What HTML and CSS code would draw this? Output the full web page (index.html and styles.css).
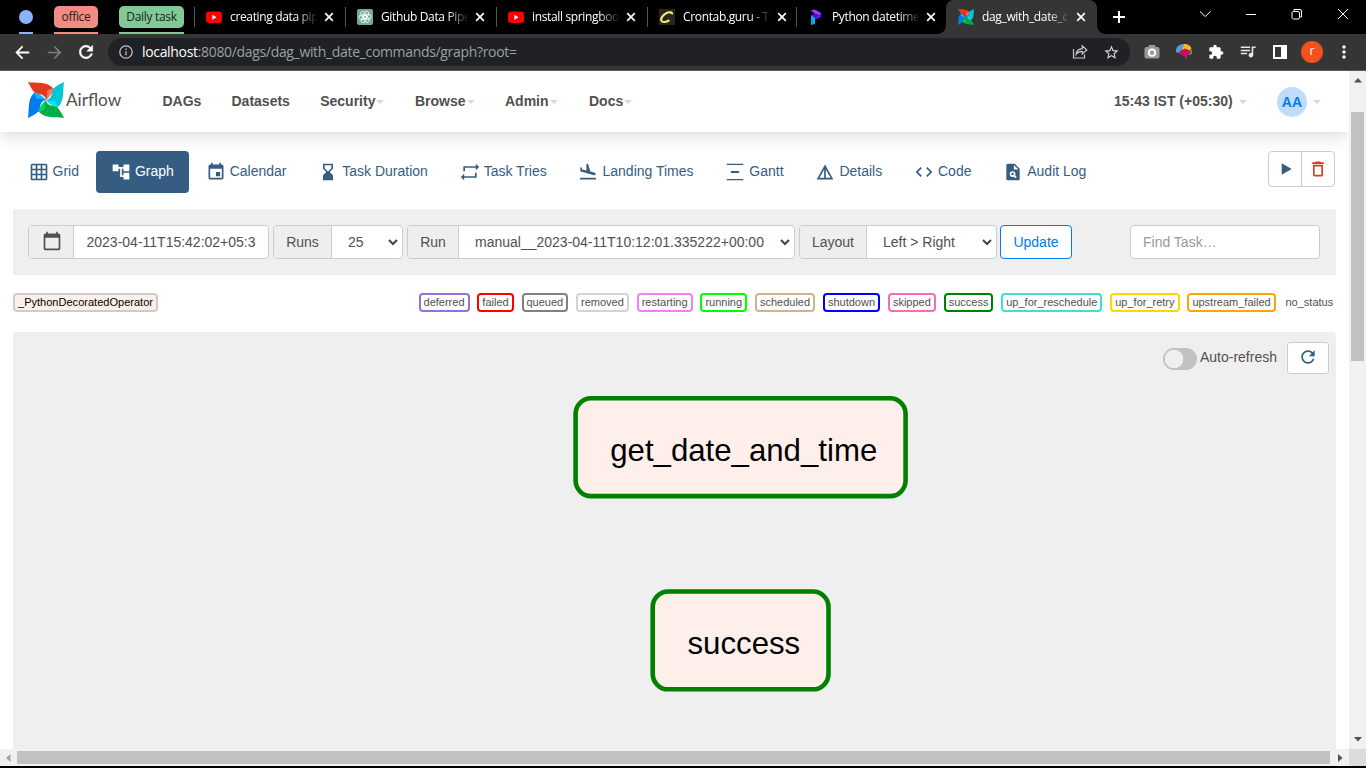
FILE: index.html
```html
<!DOCTYPE html>
<html lang="en">
<head>
<meta charset="utf-8">
<title>dag_with_date_commands - Graph - Airflow</title>
<link rel="stylesheet" href="styles.css">
</head>
<body>
<svg class="defs" width="0" height="0" aria-hidden="true">
  <defs>
    <symbol id="pinwheel" viewBox="0 0 36 36">
      <g><path fill="#e43921" d="M0 0C8 1.500 19-1 25.500 6.500L18 18C17 11 10 13 6.500 10.500C4 8 2 4 0 0Z"/><path fill="#ff7557" d="M25.500 6.500C20 7 18.500 9 19.200 11.500Q19.500 14 18 18C22 15 24.500 11 25.500 6.500Z"/></g>
      <g transform="rotate(90 18 18)"><path fill="#00c7d4" d="M0 0C8 1.500 19-1 25.500 6.500L18 18C17 11 10 13 6.500 10.500C4 8 2 4 0 0Z"/><path fill="#11e1ee" d="M25.500 6.500C20 7 18.500 9 19.200 11.500Q19.500 14 18 18C22 15 24.500 11 25.500 6.500Z"/></g>
      <g transform="rotate(180 18 18)"><path fill="#00ad46" d="M0 0C8 1.500 19-1 25.500 6.500L18 18C17 11 10 13 6.500 10.500C4 8 2 4 0 0Z"/><path fill="#04d659" d="M25.500 6.500C20 7 18.500 9 19.200 11.500Q19.500 14 18 18C22 15 24.500 11 25.500 6.500Z"/></g>
      <g transform="rotate(270 18 18)"><path fill="#017cee" d="M0 0C8 1.500 19-1 25.500 6.500L18 18C17 11 10 13 6.500 10.500C4 8 2 4 0 0Z"/><path fill="#0cb6ff" d="M25.500 6.500C20 7 18.500 9 19.200 11.500Q19.500 14 18 18C22 15 24.500 11 25.500 6.500Z"/></g>
    </symbol>
    <symbol id="youtube" viewBox="0 0 16 16"><rect y="2.500" width="16" height="11.500" rx="3" fill="#f00"/><path fill="#fff" d="M6.300 5.800v4.900l4.200-2.450z"/></symbol>
    <symbol id="close" viewBox="0 0 10 10"><path d="M1.200 1.200l7.600 7.600M8.800 1.200l-7.600 7.600" fill="none" stroke="#fff" stroke-width="1.700"/></symbol>
    <symbol id="chev" viewBox="0 0 10 7"><path d="M1 1l4 4 4-4" fill="none" stroke="#444" stroke-width="2"/></symbol>
    <symbol id="refresh" viewBox="0 0 24 24"><path d="M17.650 6.350C16.200 4.900 14.210 4 12 4c-4.420 0-7.990 3.580-7.990 8s3.570 8 7.990 8c3.730 0 6.840-2.550 7.730-6h-2.080c-.820 2.330-3.040 4-5.650 4-3.310 0-6-2.690-6-6s2.690-6 6-6c1.660 0 3.140.690 4.220 1.780L13 11h7V4l-2.350 2.350z"/></symbol>
  </defs>
</svg>

<header class="tabstrip">
  <div class="group dot"><span></span></div>
  <div class="group office"><span>office</span></div>
  <div class="group daily"><span>Daily task</span></div>
  <div class="tab"><svg class="fav"><use href="#youtube"/></svg><span class="title">creating data pip</span><svg class="x"><use href="#close"/></svg></div>
  <div class="tab"><svg class="fav" viewBox="0 0 16 16"><rect width="16" height="16" rx="2" fill="#74aa9c"/><g fill="none" stroke="#fff" stroke-width=".8"><rect x="5.600" y="2" width="4.300" height="7.500" rx="2.150" transform="rotate(30 8 8)"/><rect x="5.600" y="2" width="4.300" height="7.500" rx="2.150" transform="rotate(90 8 8)"/><rect x="5.600" y="2" width="4.300" height="7.500" rx="2.150" transform="rotate(150 8 8)"/><rect x="5.600" y="2" width="4.300" height="7.500" rx="2.150" transform="rotate(210 8 8)"/><rect x="5.600" y="2" width="4.300" height="7.500" rx="2.150" transform="rotate(270 8 8)"/><rect x="5.600" y="2" width="4.300" height="7.500" rx="2.150" transform="rotate(330 8 8)"/></g></svg><span class="title">Github Data Pipe</span><svg class="x"><use href="#close"/></svg></div>
  <div class="tab"><svg class="fav"><use href="#youtube"/></svg><span class="title">install springboo</span><svg class="x"><use href="#close"/></svg></div>
  <div class="tab tab-short"><svg class="fav" viewBox="0 0 16 16"><rect width="16" height="16" fill="#272720"/><path d="M13 5.300c.6-2-3-2.800-6-1C3.500 6.300 1.600 9.500 2.300 11.500c.7 2.200 5 2.100 8-.4" fill="none" stroke="#f8f06a" stroke-width="2.100"/></svg><span class="title">Crontab.guru - T</span><svg class="x"><use href="#close"/></svg></div>
  <div class="tab"><svg class="fav" viewBox="0 0 16 16"><path fill="#9a3cff" d="M2.500 1.500L7 .5l6 3.500v3.500L7.500 5z"/><path fill="#6411e8" d="M13 5v3L7 11V8.500l3-3z"/><path fill="#4b10c8" d="M3 6l3.500-1.500L10 6.500 7 8.500z"/><path fill="#07a8f2" d="M3 6l4 2.500V15L3 16z"/></svg><span class="title">Python datetime</span><svg class="x"><use href="#close"/></svg></div>
  <div class="tab active"><svg class="fav"><use href="#pinwheel"/></svg><span class="title">dag_with_date_c</span><svg class="x"><use href="#close"/></svg></div>
  <svg class="plus" viewBox="0 0 12 12"><path d="M6 0v12M0 6h12" stroke="#fff" stroke-width="2"/></svg>
  <svg class="win" viewBox="0 0 152 12" fill="none" stroke="#fff" stroke-width="1"><path d="M1 3.500l5.200 5L11.500 3.500M47 6.500h10M139 1l10 10M149 1l-10 10"/><rect x="93" y="3.500" width="7.500" height="7.500" rx="1.500"/><path d="M95 3V1.500h6q1.500 0 1.500 1.500v6H101"/></svg>
</header>

<div class="toolbar">
  <svg class="tb back" viewBox="0 0 24 24" fill="#fff"><path d="M20.500 10.800H7.300l5.600-5.600L11.300 3.600 3 12l8.300 8.400 1.600-1.600-5.600-5.600h13.200z"/></svg>
  <svg class="tb fwd" viewBox="0 0 24 24" fill="#7d7d7d"><path transform="translate(24 0) scale(-1 1)" d="M20.500 11H7.300l5.600-5.800L11.500 3.800 3.300 12l8.200 8.200 1.400-1.400L7.300 13h13.200z"/></svg>
  <svg class="tb reload" fill="#fff" stroke="#fff" stroke-width=".6"><use href="#refresh"/></svg>
  <div class="omnibox">
    <svg class="info" viewBox="0 0 14 14" fill="none" stroke="#bdc1c6" stroke-width="1.300"><circle cx="7" cy="7" r="6.200"/><path d="M7 6.300v4M7 3.500v1.400"/></svg>
    <span class="url"><b>localhost</b>:8080/dags/dag_with_date_commands/graph?root=</span>
    <svg class="share" viewBox="0 0 16 16" fill="none" stroke="#c9c9c9" stroke-width="1.200"><path d="M1.500 5v9h11v-3.500M4 10.500C4.500 7 7 4.800 10.300 4.700V1.800L14.800 6l-4.500 4V7.400C7.500 7.200 5.700 8.300 4 10.500z"/></svg>
    <svg class="star" viewBox="0 0 24 24" fill="#d5d5d5"><path d="M22 9.240l-7.190-.620L12 2 9.190 8.630 2 9.240l5.460 4.730L5.820 21 12 17.270 18.180 21l-1.630-7.030L22 9.240zM12 15.400l-3.760 2.270 1-4.280-3.320-2.880 4.380-.380L12 6.100l1.710 4.040 4.380.380-3.320 2.880 1 4.280L12 15.400z"/></svg>
  </div>
  <div class="exts">
    <svg viewBox="0 0 16 16"><rect x=".5" y="3" width="15" height="11.500" rx="2" fill="#999"/><path fill="#999" d="M5 1h6l1 3H4z"/><circle cx="8" cy="8.700" r="3.200" fill="#999" stroke="#fff" stroke-width="1.800"/></svg>
    <svg viewBox="0 0 16 16"><path fill="#4a9fdc" d="M0 7C0 2 4 0 8 0L7 5 3 9 0 8z"/><path fill="#fbb820" d="M8 0c4 0 7 2 7.500 5L12 7 6 5.500z"/><path fill="#55a52c" d="M13 6l3 0v4l-3 1z"/><path fill="#c80f63" d="M4 7l5-2.500L15 7l-2 3.500-2 1V16l-3-4-5-2.500z"/></svg>
    <svg viewBox="0 0 24 24" fill="#fff"><path d="M20.500 11H19V7c0-1.100-.9-2-2-2h-4V3.500C13 2.120 11.880 1 10.500 1S8 2.120 8 3.500V5H4c-1.100 0-1.990.9-1.990 2v3.800H3.500c1.490 0 2.700 1.210 2.700 2.700s-1.210 2.700-2.700 2.700H2V20c0 1.100.9 2 2 2h3.800v-1.500c0-1.490 1.210-2.700 2.700-2.700 1.490 0 2.700 1.210 2.700 2.700V22H17c1.100 0 2-.9 2-2v-4h1.500c1.380 0 2.500-1.120 2.500-2.500S21.880 11 20.500 11z"/></svg>
    <svg viewBox="2 3 20.500 20" fill="#e8e8e8"><path d="M15 6H3v2h12V6zm0 4H3v2h12v-2zM3 16h8v-2H3v2zM17 6v8.180c-.310-.110-.650-.180-1-.180-1.660 0-3 1.340-3 3s1.340 3 3 3 3-1.340 3-3V8h3V6h-5z"/></svg>
    <svg viewBox="0 0 16 16"><path fill="#fff" fill-rule="evenodd" d="M1 1h14v14H1zM3 3v10h6V3z"/></svg>
    <span class="profile">r</span>
    <svg viewBox="0 0 16 16" fill="#fff"><circle cx="8" cy="3" r="1.700"/><circle cx="8" cy="8" r="1.700"/><circle cx="8" cy="13" r="1.700"/></svg>
  </div>
</div>

<div class="viewport">
  <div class="page">
    <nav class="navbar">
      <a class="brand"><svg><use href="#pinwheel"/></svg><span>Airflow</span></a>
      <a>DAGs</a><a>Datasets</a><a>Security<i></i></a><a>Browse<i></i></a><a>Admin<i></i></a><a>Docs<i></i></a>
      <a class="clock">15:43 IST (+05:30)<i></i></a>
      <a class="user"><span>AA</span><i></i></a>
    </nav>
    <main class="content">
      <div class="views">
        <a><svg viewBox="0 0 24 24"><path d="M20 2H4c-1.100 0-2 .9-2 2v16c0 1.100.9 2 2 2h16c1.100 0 2-.9 2-2V4c0-1.100-.9-2-2-2zM8 20H4v-4h4v4zm0-6H4v-4h4v4zm0-6H4V4h4v4zm6 12h-4v-4h4v4zm0-6h-4v-4h4v4zm0-6h-4V4h4v4zm6 12h-4v-4h4v4zm0-6h-4v-4h4v4zm0-6h-4V4h4v4z"/></svg>Grid</a>
        <a class="current"><svg viewBox="0 0 24 24"><path d="M22 11V3h-7v3H9V3H2v8h7V8h2v10h4v3h7v-8h-7v3h-2V8h2v3z"/></svg>Graph</a>
        <a><svg viewBox="0 0 24 24"><path d="M17 12h-5v5h5v-5zM16 1v2H8V1H6v2H5c-1.110 0-1.990.9-1.990 2L3 19c0 1.100.890 2 2 2h14c1.100 0 2-.9 2-2V5c0-1.100-.9-2-2-2h-1V1h-2zm3 18H5V8h14v11z"/></svg>Calendar</a>
        <a><svg viewBox="0 0 24 24"><path d="M18 22l-.010-6L14 12l3.990-4.010L18 2H6v6l4 4-4 3.990V22h12zM8 7.500V4h8v3.500l-4 4-4-4z"/></svg>Task Duration</a>
        <a><svg viewBox="0 0 24 24"><path d="M5 5h14V2l4 4-4 4V7H6v4H4V5zM19 19H5v3l-4-4 4-4v3h13v-4h2v6z"/></svg>Task Tries</a>
        <a><svg viewBox="0 0 24 24"><path d="M2.500 19h19v2h-19v-2zm7.180-5.730l4.350 1.160 5.310 1.420c.8.210 1.620-.260 1.840-1.060.210-.8-.260-1.620-1.060-1.840l-5.310-1.420-2.760-9.020L10.120 2v8.280L5.150 8.950l-.930-2.320-1.450-.390v5.170l1.600.430 5.310 1.430z"/></svg>Landing Times</a>
        <a><svg viewBox="0 0 24 24"><path d="M22 2v1.500H2V2h20zM7 10.700v2.600h10v-2.600H7zM2 20.500V22h20v-1.500H2z"/></svg>Gantt</a>
        <a><svg viewBox="0 0 24 24"><path d="M12 3L2 21h20L12 3zm1 5.920L18.600 19H13V8.920zm-2 0V19H5.400L11 8.920z"/></svg>Details</a>
        <a><svg viewBox="0 0 24 24"><path d="M9.400 16.600L4.800 12l4.600-4.600L8 6l-6 6 6 6 1.400-1.400zm5.200 0l4.600-4.600-4.600-4.600L16 6l6 6-6 6-1.400-1.400z"/></svg>Code</a>
        <a><svg viewBox="0 0 24 24"><path d="M14 2H6c-1.100 0-1.990.9-1.990 2L4 20c0 1.100.890 2 1.990 2H18c1.100 0 2-.9 2-2V8l-6-6zm1.040 17.450l-1.880-1.880c-1.330.710-3.010.530-4.130-.590-1.370-1.370-1.370-3.580 0-4.950s3.580-1.370 4.950 0c1.120 1.120 1.310 2.800.590 4.130l1.880 1.880-1.410 1.410zM13 9V3.500L18.500 9H13z"/><circle cx="11.500" cy="14.500" r="1.500"/></svg>Audit Log</a>
        <div class="actions">
          <span><svg viewBox="0 0 24 24" fill="#355d82"><path d="M8 5v14l12-7z"/></svg></span>
          <span><svg viewBox="0 0 24 24" fill="#e43921"><path d="M6 19c0 1.100.9 2 2 2h8c1.100 0 2-.9 2-2V7H6v12zM8 9h8v10H8V9zm7.500-5l-1-1h-5l-1 1H5v2h14V4z"/></svg></span>
        </div>
      </div>

      <form class="filters">
        <div class="field base"><label><svg viewBox="0 0 24 24"><path d="M20 3h-1V1h-2v2H7V1H5v2H4c-1.100 0-2 .9-2 2v16c0 1.100.9 2 2 2h16c1.100 0 2-.9 2-2V5c0-1.100-.9-2-2-2zm0 18H4V8h16v13z"/></svg></label><div>2023-04-11T15:42:02+05:3</div></div>
        <div class="field runs"><label>Runs</label><div>25<svg><use href="#chev"/></svg></div></div>
        <div class="field run"><label>Run</label><div>manual__2023-04-11T10:12:01.335222+00:00<svg><use href="#chev"/></svg></div></div>
        <div class="field layout"><label>Layout</label><div>Left &gt; Right<svg><use href="#chev"/></svg></div></div>
        <span class="update">Update</span>
        <div class="search">Find Task…</div>
      </form>

      <div class="legend">
        <span class="op">_PythonDecoratedOperator</span>
        <span class="deferred">deferred</span><span class="failed">failed</span><span class="queued">queued</span><span class="removed">removed</span><span class="restarting">restarting</span><span class="running">running</span><span class="scheduled">scheduled</span><span class="shutdown">shutdown</span><span class="skipped">skipped</span><span class="success">success</span><span class="reschedule">up_for_reschedule</span><span class="retry">up_for_retry</span><span class="upstream">upstream_failed</span><span class="none">no_status</span>
      </div>

      <section class="graph">
        <div class="graph-tools"><span class="switch"></span><span class="auto">Auto-refresh</span><span class="reload-btn"><svg fill="#355d82"><use href="#refresh"/></svg></span></div>
        <svg class="nodes" viewBox="0 0 1323 375">
          <rect x="562.600" y="24.300" width="330" height="97.800" rx="15.500"/>
          <text x="597.200" y="87">get_date_and_time</text>
          <rect x="639.700" y="217.500" width="175.800" height="97.800" rx="15.500"/>
          <text x="674.500" y="280.300">success</text>
        </svg>
      </section>
    </main>
  </div>
  <div class="vbar"><svg viewBox="0 0 8 5"><path fill="#505050" d="M0 4.500L4 0l4 4.500z"/></svg><span></span><svg viewBox="0 0 8 5"><path fill="#505050" d="M0 0l4 4.500L8 0z"/></svg></div>
  <div class="hbar"><svg viewBox="0 0 5 8"><path fill="#a3a3a3" d="M4.500 0L0 4l4.500 4z"/></svg><span></span><svg viewBox="0 0 5 8"><path fill="#505050" d="M0 0l4.500 4L0 8z"/></svg></div>
  <div class="corner"></div>
</div>
</body>
</html>
```
FILE: styles.css
```css
* { box-sizing: border-box; }
body { margin: 0; width: 1366px; height: 768px; overflow: hidden; background: #000; font-family: "Liberation Sans", Arial, sans-serif; font-size: 14px; color: #51504f; }
svg { display: block; flex: none; }
.defs { position: absolute; }

/* browser tabs */
.tabstrip { display: flex; height: 34px; background: #000; font-family: "Open Sans", sans-serif; font-size: 12px; color: #fff; padding-left: 19px; }
.group { height: 34px; padding-top: 6px; border-bottom: 2px solid; flex: none; }
.group span { display: block; height: 22px; line-height: 21px; border-radius: 5px; text-align: center; color: #202124; white-space: nowrap; }
.dot { width: 14px; border-color: #8ab4f8; margin-right: 21px; padding-top: 10px; }
.dot span { height: 14px; border-radius: 50%; background: #8ab4f8; }
.office { width: 44px; border-color: #f28b82; margin-right: 21px; letter-spacing: -.3px; }
.office span { background: #f28b82; }
.daily { width: 65px; border-color: #81c995; margin-right: 10px; letter-spacing: -.3px; }
.daily span { background: #81c995; }
.tab { display: flex; align-items: center; width: 151px; height: 34px; padding-left: 12px; flex: none; background: linear-gradient(#555, #555) 0 7px / 1px 20px no-repeat; }
.tab-short { width: 149px; }
.tab-short + .tab { width: 150px; }
.fav { width: 16px; height: 16px; margin-right: 8px; }
.title { width: 88px; white-space: nowrap; line-height: 18px; letter-spacing: -.35px; -webkit-mask-image: linear-gradient(90deg, #000 66px, transparent 88px); mask-image: linear-gradient(90deg, #000 66px, transparent 88px); }
.x { width: 10px; height: 10px; margin-left: 6px; }
.active { background: #353535; border-radius: 8px 8px 0 0; position: relative; }
.active::before, .active::after { content: ""; position: absolute; bottom: 0; width: 8px; height: 8px; }
.active::before { left: -8px; background: radial-gradient(circle at 0 0, transparent 7.500px, #353535 8px); }
.active::after { right: -8px; background: radial-gradient(circle at 100% 0, transparent 7.500px, #353535 8px); }
.plus { width: 12px; height: 12px; margin: 11px 0 0 16px; }
.win { width: 152px; height: 12px; margin: 8px 0 0 74px; }

/* address bar */
.toolbar { display: flex; align-items: center; height: 37px; background: #353535; border-bottom: 1px solid #5b5b5b; padding-left: 13px; font-family: "Open Sans", sans-serif; }
.tb { width: 19px; height: 19px; margin-right: 13px; }
.reload { width: 20px; height: 20px; margin-left: -1px; margin-right: 12px; }
.omnibox { display: flex; align-items: center; width: 1022px; height: 28px; border-radius: 14px; background: #202124; padding-left: 11px; }
.info { width: 14px; height: 14px; margin-right: 9px; }
.url { width: 930px; color: #9aa0a6; font-size: 14px; letter-spacing: -.33px; line-height: 20px; white-space: nowrap; }
.url b { font-weight: 400; color: #fff; }
.share { width: 16px; height: 16px; margin-right: 15px; }
.star { width: 17px; height: 17px; }
.exts { display: flex; align-items: center; gap: 16px; margin-left: 14px; }
.exts svg { width: 16px; height: 16px; }
.profile { width: 22px; height: 22px; margin: 0 -3px; border-radius: 50%; background: #f4511e; color: #fff; font-size: 12px; line-height: 20px; text-align: center; }

/* page viewport with scrollbars */
.viewport { display: grid; grid-template: 678px 17px / 1349px 17px; height: 695px; }
.page { background: #fff; overflow: hidden; }
.vbar { background: #f1f1f1; display: flex; flex-direction: column; align-items: center; padding: 7px 0; }
.vbar svg { width: 8px; height: 5px; }
.vbar span { width: 13px; height: 249px; margin: 29px 0 376px; background: #c1c1c1; }
.hbar { background: #f1f1f1; display: flex; align-items: center; padding-left: 6px; }
.hbar svg { width: 5px; height: 8px; }
.hbar span { width: 1313px; height: 13px; margin: 0 8px 0 6px; background: #c1c1c1; }
.corner { background: #dcdcdc; }

/* Airflow navigation */
.navbar { display: grid; grid-template-columns: 134.500px 69px 88.700px 94.800px 90px 84px 525px 162px auto; align-items: center; height: 61px; padding: 0 0 1px 28px; font-weight: 700; background: #fff; box-shadow: 0 1px 20px rgba(0,0,0,.2); position: relative; white-space: nowrap; }
.navbar a { display: flex; align-items: center; }
.navbar i { border: 4px solid transparent; border-top-color: #e2d2e2; border-bottom: 0; margin: 1px 0 0 1px; }
.brand svg { width: 36px; height: 36px; margin: -3px 2px 0 0; }
.brand span { font: 400 17.200px Lato, sans-serif; margin-top: -4px; }
.navbar .clock i { margin-left: 6px; }
.user span { width: 30px; height: 30px; border-radius: 50%; background: #bfddfb; color: #017cee; text-align: center; line-height: 30px; margin: 1px 0 0 1px; }
.navbar .user i { margin-left: 6px; }

.content { padding: 19px 13px 0; width: 1349px; }
.views { display: flex; height: 58px; }
.views > a { display: flex; height: 42px; padding: 0 15px; margin-right: 1.800px; color: #355d82; fill: #355d82; border-radius: 4px; line-height: 40px; white-space: nowrap; }
.views > a:first-child { padding: 0 14.500px 0 15.500px; }
.views > a svg { width: 20px; height: 20px; margin: 11px 4px 0 0; }
.views > .current { background: #355d82; color: #fff; fill: #fff; margin-left: .7px; }
.actions { display: flex; width: 67px; height: 36px; border: 1px solid #ccc; border-radius: 4px; margin: 0 1px 0 auto; }
.actions span { flex: 1; display: flex; align-items: center; justify-content: center; }
.actions span + span { border-left: 1px solid #ccc; }
.actions svg { width: 20px; height: 20px; }

/* run filters */
.filters { display: flex; height: 66px; padding: 16px 15px; background: #efefef; white-space: nowrap; }
.field { display: flex; height: 34px; margin-right: 4px; border: 1px solid #ccc; border-radius: 4px; background: #fff; line-height: 32px; overflow: hidden; }
.field label { display: flex; align-items: center; justify-content: center; background: #eee; border-right: 1px solid #ccc; flex: none; }
.field label svg { width: 20px; height: 20px; fill: #51504f; margin: -2px 0 0 1px; }
.field div { flex: 1; display: flex; align-items: center; justify-content: space-between; padding: 0 4px 0 16px; }
.field div svg { width: 10px; height: 7px; }
.base { width: 241px; } .base label { width: 45px; } .base div { padding-left: 12.500px; }
.runs { width: 130px; } .runs label { width: 58px; }
.run { width: 388px; } .run label { width: 51px; }
.layout { width: 198px; margin-right: 3px; } .layout label { width: 67px; }
.update { width: 72px; height: 34px; border: 1px solid #017cee; border-radius: 4px; background: #fff; color: #017cee; line-height: 32px; text-align: center; }
.search { width: 190px; height: 34px; margin-left: 58px; padding-left: 12px; border: 1px solid #ccc; border-radius: 4px; background: #fff; color: #999; line-height: 32px; }

/* operator and state legend */
.legend { display: flex; height: 57px; padding-top: 18px; gap: 7.850px; font-size: 11px; white-space: nowrap; }
.legend span { flex: none; height: 19px; padding: 0 3px; border: 2px solid; border-radius: 4px; line-height: 15px; text-align: center; }
.legend .op { background: #ffefeb; color: #000; border-color: #ccc; margin-right: auto; letter-spacing: .02px; }
.legend .deferred { border-color: mediumpurple; }
.legend .failed { border-color: red; }
.legend .queued { border-color: gray; }
.legend .removed { border-color: lightgrey; }
.legend .restarting { border-color: violet; }
.legend .running { border-color: lime; }
.legend .scheduled { border-color: tan; }
.legend .shutdown { border-color: blue; }
.legend .skipped { border-color: hotpink; }
.legend .success { border-color: green; }
.legend .reschedule { border-color: turquoise; }
.legend .retry { border-color: gold; }
.legend .upstream { border-color: orange; }
.legend .none { border-color: transparent; padding: 0 .8px 0 0; }

/* DAG graph */
.graph { height: 430px; background: #efefef; border-radius: 4px; }
.graph-tools { display: flex; align-items: center; justify-content: flex-end; height: 42px; padding: 10px 7px 0 0; }
.switch { width: 34px; height: 22px; border-radius: 11px; margin: 2px 3px 0 0; background: radial-gradient(circle at 11px 11px, #efefef 9px, transparent 9.500px) #c4c2c1; }
.auto { margin: -2px 10px 0 0; }
.reload-btn { display: flex; align-items: center; justify-content: center; width: 42px; height: 32px; border: 1px solid #ccc; border-radius: 3px; background: #fff; }
.reload-btn svg { width: 20px; height: 20px; margin-top: -2px; }
.nodes { width: 1323px; height: 375px; overflow: visible; }
.nodes rect { fill: #ffefeb; stroke: green; stroke-width: 4.600; }
.nodes text { font: 31.200px "Liberation Sans", Arial, sans-serif; fill: #000; }
```
